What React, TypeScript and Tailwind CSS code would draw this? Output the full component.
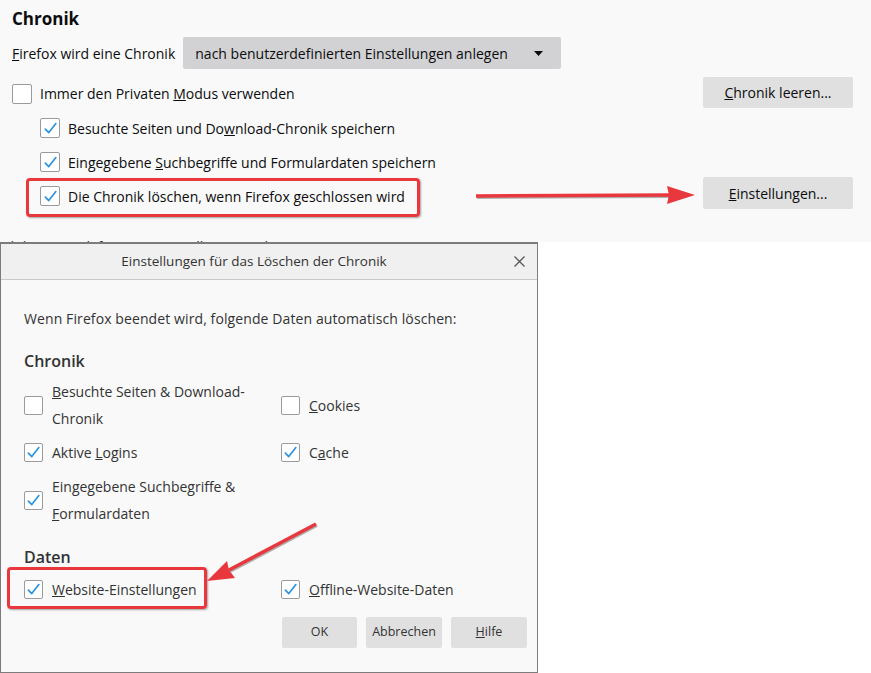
import type { ReactNode } from "react";

// Firefox "Chronik" settings + the "Löschen der Chronik" dialog, with red annotations

const Check = ({ checked, size = 20 }: { checked?: boolean; size?: number }) => (
  <span
    className="shrink-0 bg-white border border-[#9b9b9f] rounded-[2px] flex items-center justify-center"
    style={{ width: size, height: size }}
  >
    {checked && (
      <svg width="15" height="15" viewBox="0 0 14 14" fill="none">
        <path d="M2.2 7.6 L5.4 10.8 L12 2.4" stroke="#2b93e0" strokeWidth="1.6" strokeLinecap="round" strokeLinejoin="round" />
      </svg>
    )}
  </span>
);

const Btn = ({ children, className = "" }: { children: ReactNode; className?: string }) => (
  <button className={`bg-[#e0e0e1] rounded-[2px] flex items-center justify-center ${className}`}>{children}</button>
);

const DlgOption = ({ checked, children }: { checked?: boolean; children: ReactNode }) => (
  <div className="flex items-center">
    <Check checked={checked} size={19} />
    <span className="ml-[9px] leading-[27px]">{children}</span>
  </div>
);

export default function App() {
  return (
    <div className="relative w-[871px] h-[673px] bg-white overflow-hidden font-['Open_Sans',sans-serif] text-[#0c0c0d]">
      {/* Preferences section */}
      <section className="relative h-[242px] bg-[#f9f9fa] pl-[12px] pr-[18px] pt-[8px] text-[14px]">
        <h2 className="text-[17px] font-bold leading-[22px]">Chronik</h2>

        <div className="mt-[7px] h-[32px] flex items-center">
          <span><u>F</u>irefox wird eine Chronik</span>
          <div className="ml-[8px] w-[378px] h-[32px] bg-[#d2d2d5] rounded-[2px] pl-[12px] pr-[18px] flex items-center justify-between">
            <span>nach benutzerdefinierten Einstellungen anlegen</span>
            <svg width="9" height="5" viewBox="0 0 9 5"><path d="M0 0 H9 L4.5 5 Z" fill="#0c0c0d" /></svg>
          </div>
        </div>

        <div className="mt-[8px] h-[31px] flex items-center justify-between">
          <div className="flex items-center pt-[2px]">
            <Check />
            <span className="ml-[8px]">Immer den Privaten <u>M</u>odus verwenden</span>
          </div>
          <Btn className="w-[150px] h-[31px] text-[#0c0c0d]"><span><u>C</u>hronik leeren...</span></Btn>
        </div>

        <div className="mt-[3px] pl-[28px]">
          <div className="h-[34px] flex items-center">
            <Check checked />
            <span className="ml-[8px]">Besuchte Seiten und Do<u>w</u>nload-Chronik speichern</span>
          </div>
          <div className="h-[34px] flex items-center">
            <Check checked />
            <span className="ml-[8px]">Eingegebene <u>S</u>uchbegriffe und Formulardaten speichern</span>
          </div>
          <div className="h-[34px] flex items-center justify-between">
            <div className="flex items-center">
              <Check checked />
              <span className="ml-[8px]">Die Chronik löschen, wenn Firefox <u>g</u>eschlossen wird</span>
            </div>
            <Btn className="w-[150px] h-[32px] self-start -mt-[2px] text-[#0c0c0d]"><span><u>E</u>instellungen...</span></Btn>
          </div>
        </div>

        {/* cut-off line of the page behind the dialog */}
        <div className="absolute left-0 top-[238px] h-[4px] w-[360px] overflow-hidden text-[14px] text-[#333]">
          <div className="flex items-center -mt-[1px] -ml-[4px] leading-[20px]">
            <span>ach benutzerdefinierten Einstellungen anlegen</span>
            <svg className="ml-[24px]" width="8" height="5" viewBox="0 0 9 5"><path d="M0 0 H9 L4.5 5 Z" fill="#333" /></svg>
          </div>
        </div>
      </section>

      <div className="flex">
        {/* Dialog */}
        <div className="w-[538px] h-[431px] border border-t-2 border-[#7c7c7c] bg-[#f9f9fa] flex flex-col text-[#333]">
          <div className="h-[36px] bg-[#f0f0f0] border-b border-[#c9c9c9] flex items-center">
            <div className="flex-1 text-center text-[13.5px] pl-[2px]">Einstellungen für das Löschen der Chronik</div>
            <div className="w-[32px] flex items-center justify-center pr-[4px]">
              <svg width="11" height="11" viewBox="0 0 11 11">
                <path d="M0.5 0.5 L10.5 10.5 M10.5 0.5 L0.5 10.5" stroke="#555" strokeWidth="1.3" />
              </svg>
            </div>
          </div>

          <div className="pl-[23px] pr-[10px] text-[14px]">
            <p className="mt-[29px] leading-[20px] tracking-[0.1px]">Wenn Firefox beendet wird, folgende Daten automatisch löschen:</p>

            <h3 className="mt-[21px] text-[16px] font-semibold leading-[22px]">Chronik</h3>
            <div className="mt-[6px] grid grid-cols-[257px_1fr] gap-y-[7px]">
              <DlgOption><u>B</u>esuchte Seiten &amp; Download-<br />Chronik</DlgOption>
              <DlgOption><u>C</u>ookies</DlgOption>
              <DlgOption checked>Aktive <u>L</u>ogins</DlgOption>
              <DlgOption checked>C<u>a</u>che</DlgOption>
              <DlgOption checked>Eingegebene Suchbegriffe &amp;<br /><u>F</u>ormulardaten</DlgOption>
              <div />
            </div>

            <h3 className="mt-[19px] text-[16px] font-semibold leading-[22px]">Daten</h3>
            <div className="mt-[8px] grid grid-cols-[257px_1fr]">
              <DlgOption checked><u>W</u>ebsite-Einstellungen</DlgOption>
              <DlgOption checked><u>O</u>ffline-Website-Daten</DlgOption>
            </div>

            <div className="mt-[14px] flex justify-end gap-[9px] text-[12.5px]">
              <Btn className="w-[75px] h-[31px] text-[#333]">OK</Btn>
              <Btn className="w-[76px] h-[31px] text-[#333]">Abbrechen</Btn>
              <Btn className="w-[76px] h-[31px] text-[#333]"><span><u>H</u>ilfe</span></Btn>
            </div>
          </div>
        </div>
        <div className="flex-1 bg-white" />
      </div>

      {/* Red annotations */}
      <div className="absolute left-[26px] top-[178px] w-[394px] h-[39px] border-[3px] border-[#e8383d] rounded-[4px] shadow-[1px_1px_2px_rgba(0,0,0,0.35)]" />
      <div className="absolute left-[7px] top-[567px] w-[200px] h-[42px] border-[3px] border-[#e8383d] rounded-[4px] shadow-[1px_1px_2px_rgba(0,0,0,0.35)]" />
      <svg className="absolute left-0 top-0 pointer-events-none" width="871" height="673">
        <g opacity="0.45" transform="translate(1,1.5)">
          <path d="M476 196 L672 195" stroke="#555" strokeWidth="3" />
          <path d="M316 524 L229 570" stroke="#555" strokeWidth="3" />
        </g>
        <path d="M476 196 L672 195" stroke="#e8383d" strokeWidth="3.5" />
        <polygon points="695,195 667,186 669,195 667,204" fill="#e8383d" />
        <path d="M316 524 L229 570" stroke="#e8383d" strokeWidth="3.5" />
        <polygon points="207,581 235,578 229,570 227,561" fill="#e8383d" />
      </svg>
    </div>
  );
}
